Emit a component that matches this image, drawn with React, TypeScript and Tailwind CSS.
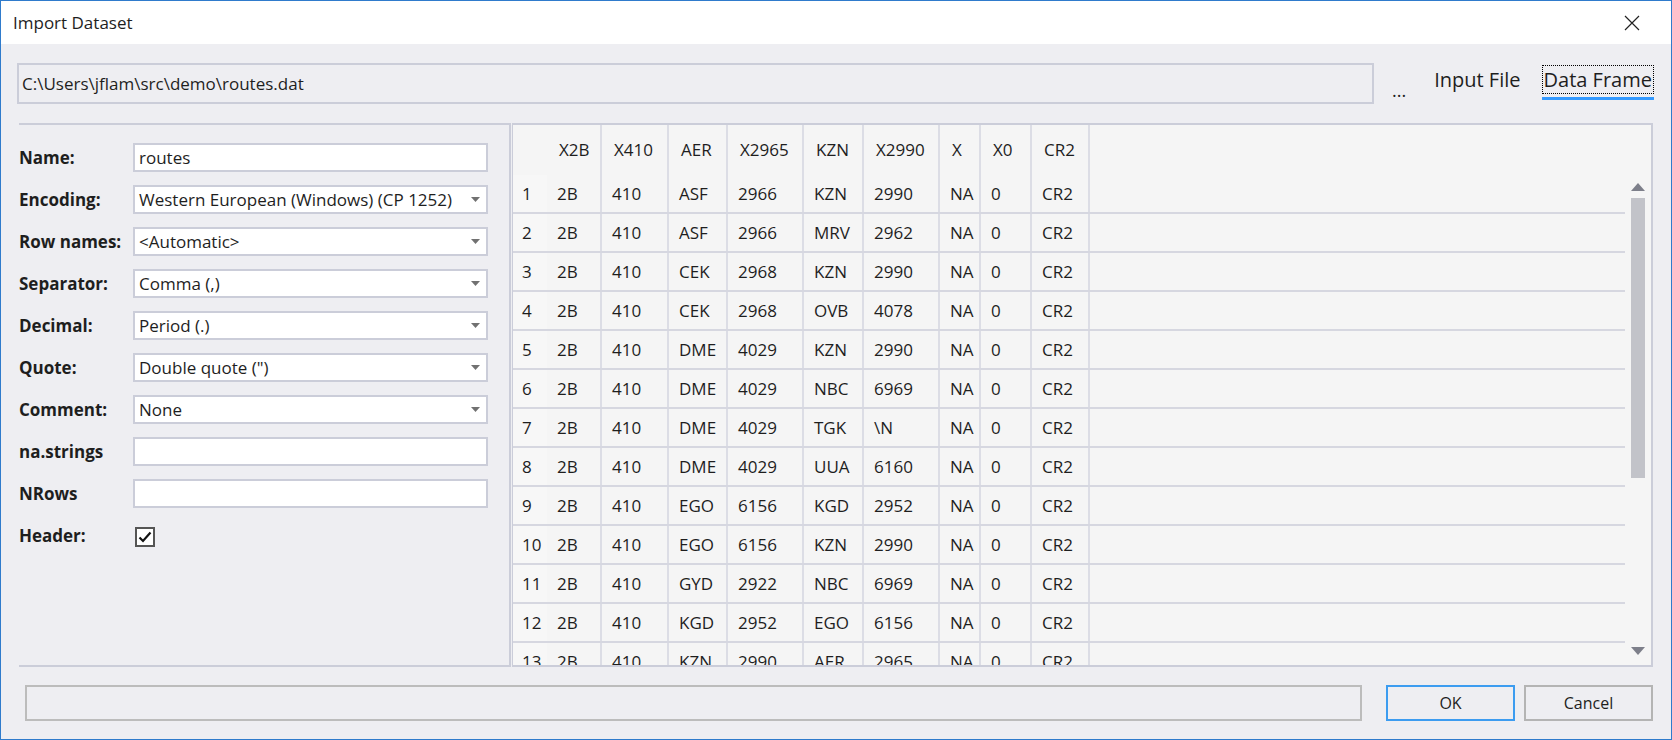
import React from "react";

const rows = [
  ["1", "2B", "410", "ASF", "2966", "KZN", "2990", "NA", "0", "CR2"],
  ["2", "2B", "410", "ASF", "2966", "MRV", "2962", "NA", "0", "CR2"],
  ["3", "2B", "410", "CEK", "2968", "KZN", "2990", "NA", "0", "CR2"],
  ["4", "2B", "410", "CEK", "2968", "OVB", "4078", "NA", "0", "CR2"],
  ["5", "2B", "410", "DME", "4029", "KZN", "2990", "NA", "0", "CR2"],
  ["6", "2B", "410", "DME", "4029", "NBC", "6969", "NA", "0", "CR2"],
  ["7", "2B", "410", "DME", "4029", "TGK", "\\N", "NA", "0", "CR2"],
  ["8", "2B", "410", "DME", "4029", "UUA", "6160", "NA", "0", "CR2"],
  ["9", "2B", "410", "EGO", "6156", "KGD", "2952", "NA", "0", "CR2"],
  ["10", "2B", "410", "EGO", "6156", "KZN", "2990", "NA", "0", "CR2"],
  ["11", "2B", "410", "GYD", "2922", "NBC", "6969", "NA", "0", "CR2"],
  ["12", "2B", "410", "KGD", "2952", "EGO", "6156", "NA", "0", "CR2"],
  ["13", "2B", "410", "KZN", "2990", "AER", "2965", "NA", "0", "CR2"],
];

const headers = ["X2B", "X410", "AER", "X2965", "KZN", "X2990", "X", "X0", "CR2"];

// column widths, first is the row-number column
const widths = ["w-[34px]", "w-[55px]", "w-[67px]", "w-[59px]", "w-[76px]", "w-[60px]", "w-[76px]", "w-[41px]", "w-[51px]", "w-[58px]"];

const fields: { label: string; value?: string; combo?: boolean }[] = [
  { label: "Name:", value: "routes" },
  { label: "Encoding:", value: "Western European (Windows) (CP 1252)", combo: true },
  { label: "Row names:", value: "<Automatic>", combo: true },
  { label: "Separator:", value: "Comma (,)", combo: true },
  { label: "Decimal:", value: "Period (.)", combo: true },
  { label: "Quote:", value: 'Double quote (")', combo: true },
  { label: "Comment:", value: "None", combo: true },
  { label: "na.strings" },
  { label: "NRows" },
];

function Arrow() {
  return (
    <svg width="9" height="5" viewBox="0 0 9 5" className="mr-[6px] shrink-0">
      <path d="M0 0 L9 0 L4.5 5 Z" fill="#717171" />
    </svg>
  );
}

function FieldRow({ label, value, combo }: { label: string; value?: string; combo?: boolean }) {
  return (
    <div className="flex items-center h-[29px] mb-[13px]">
      <div className="w-[114px] font-bold text-[17px] text-[#1e1e1e] whitespace-nowrap">{label}</div>
      <div className="w-[355px] h-[29px] bg-white border-2 border-[#cbcdd9] flex items-center justify-between pl-[4px]">
        <span className="text-[17px] text-[#1e1e1e] whitespace-nowrap">{value ?? ""}</span>
        {combo && <Arrow />}
      </div>
    </div>
  );
}

export default function App() {
  return (
    <div
      className="w-[1672px] h-[740px] border border-[#2f7bcc] bg-[#eeeef2] flex flex-col overflow-hidden"
      style={{ fontFamily: '"Open Sans", "Noto Sans", sans-serif' }}
    >
      {/* title bar */}
      <div className="h-[43px] bg-white flex items-center justify-between shrink-0">
        <span className="pl-[12px] text-[17px] text-[#1e1e1e]">Import Dataset</span>
        <svg width="16" height="16" viewBox="0 0 16 16" className="mr-[31px]">
          <path d="M1 1 L15 15 M15 1 L1 15" stroke="#222" strokeWidth="1.2" />
        </svg>
      </div>

      {/* file path + tabs */}
      <div className="flex items-center mt-[19px] h-[41px] shrink-0">
        <div className="ml-[16px] w-[1357px] h-[41px] border-2 border-[#cbcdd9] flex items-center pl-[3px]">
          <span className="text-[17px] text-[#1e1e1e]">C:\Users\jflam\src\demo\routes.dat</span>
        </div>
        <span className="ml-[18px] self-end mb-[5px] text-[18px] text-[#1e1e1e] leading-none">...</span>
        <span className="ml-[28px] text-[20px] text-[#1e1e1e] -mt-[8px]">Input File</span>
        <div className="ml-[21px] relative -mt-[8px]">
          <span className="text-[20px] text-[#1e1e1e] border border-dotted border-black px-[1px]">Data Frame</span>
          <div className="absolute left-0 right-0 -bottom-[5px] h-[3px] bg-[#3399ff]" />
        </div>
      </div>

      {/* main area */}
      <div className="flex mt-[19px] h-[544px] shrink-0 ml-[18px] mr-[18px]">
        <div className="w-[492px] border-t-2 border-b-2 border-r-2 border-[#cbcdd9] pt-[18px]">
          {fields.map((f) => (
            <FieldRow key={f.label} {...f} />
          ))}
          <div className="flex items-center h-[29px]">
            <div className="w-[114px] font-bold text-[17px] text-[#1e1e1e]">Header:</div>
            <div className="ml-[2px] mt-[3px] w-[20px] h-[20px] border-2 border-[#555] bg-white flex items-center justify-center">
              <svg width="14" height="12" viewBox="0 0 14 12">
                <path d="M1.5 6.5 L5 10 L12.5 1.5" stroke="#111" strokeWidth="2.2" fill="none" />
              </svg>
            </div>
          </div>
        </div>

        {/* data grid */}
        <div className="ml-[1px] flex-1 border-t-2 border-b-2 border-r-2 border-l border-[#cbcdd9] bg-[#f5f5f5] flex overflow-hidden">
          <div className="flex-1 overflow-hidden text-[17px] text-[#1e1e1e]">
            <div className="flex h-[50px]">
              {["", ...headers].map((h, i) => (
                <div
                  key={i}
                  className={`${widths[i]} shrink-0 h-full flex items-center ${i === 0 ? "" : "border-r-2 border-[#dcdde5] pl-[12px]"}`}
                >
                  {h}
                </div>
              ))}
            </div>
            {rows.map((r) => (
              <div key={r[0]} className="flex h-[39px] border-b-2 border-[#d6d7e0]">
                {r.map((c, i) => (
                  <div
                    key={i}
                    className={`${widths[i]} shrink-0 h-full flex items-center ${i === 0 ? "pl-[9px] bg-[#f7f7f7]" : "border-r-2 border-[#dcdde5] pl-[10px]"}`}
                  >
                    {c}
                  </div>
                ))}
              </div>
            ))}
          </div>

          {/* scrollbar */}
          <div className="w-[26px] shrink-0 flex flex-col items-center pt-[58px]">
            <svg width="14" height="8" viewBox="0 0 14 8">
              <path d="M0 8 L7 0 L14 8 Z" fill="#7d7f8a" />
            </svg>
            <div className="mt-[7px] w-[14px] h-[280px] bg-[#c2c3c9]" />
            <div className="flex-1" />
            <svg width="14" height="8" viewBox="0 0 14 8" className="mb-[10px]">
              <path d="M0 0 L14 0 L7 8 Z" fill="#7d7f8a" />
            </svg>
          </div>
        </div>
      </div>

      {/* bottom bar */}
      <div className="flex mt-[18px] h-[36px] shrink-0">
        <div className="ml-[24px] w-[1337px] border-2 border-[#bcbcbc]" />
        <button className="ml-[24px] w-[129px] border-2 border-[#3c9cf0] text-[16px] text-[#1e1e1e]">OK</button>
        <button className="ml-[9px] w-[129px] border-2 border-[#b4b4b4] text-[16px] text-[#1e1e1e]">Cancel</button>
      </div>
    </div>
  );
}
